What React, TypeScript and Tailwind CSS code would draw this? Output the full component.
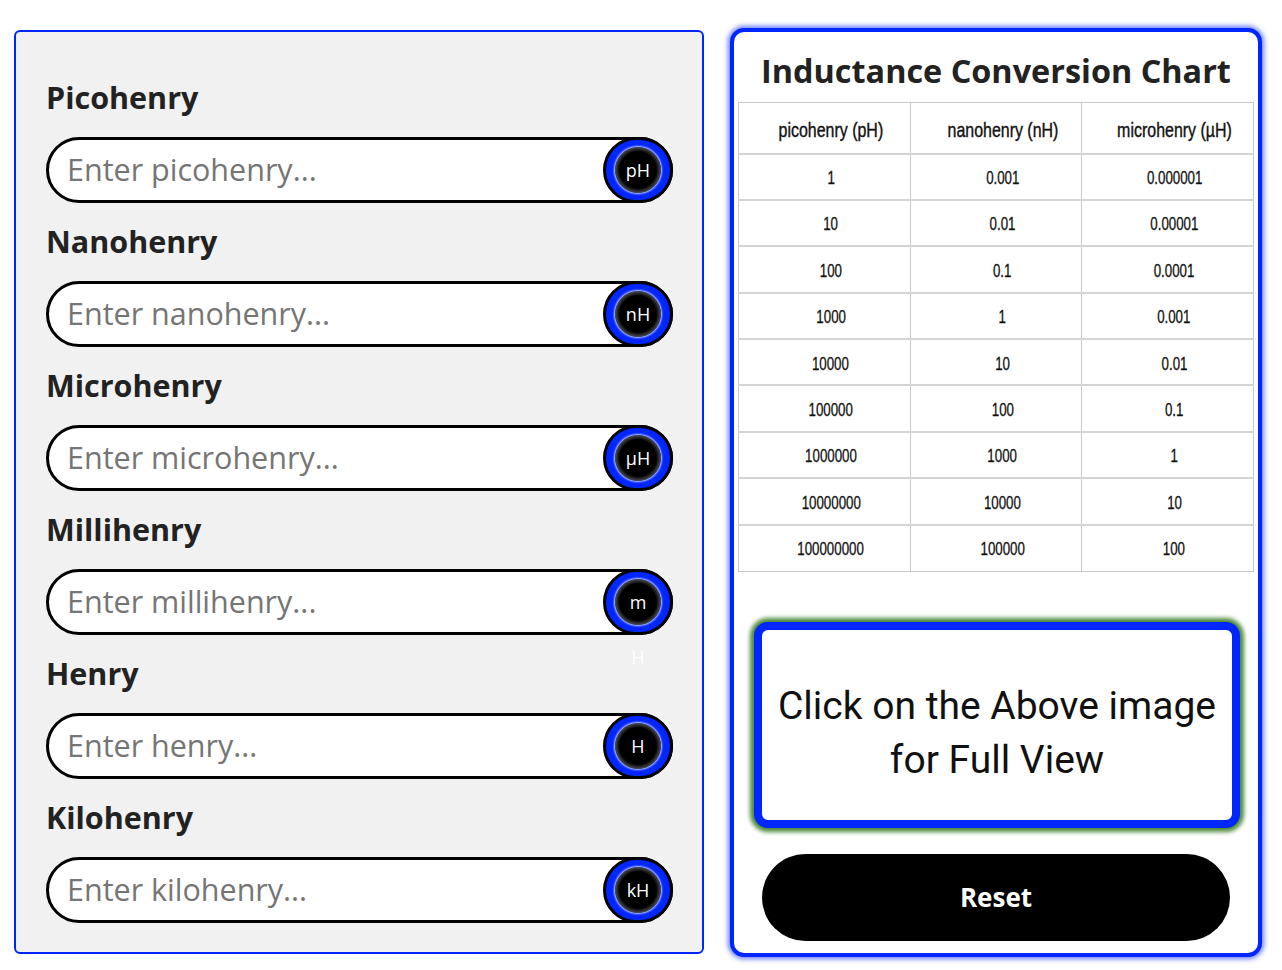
import React from "react";

const units = [
  { label: "Picohenry", placeholder: "Enter picohenry...", sym: "pH" },
  { label: "Nanohenry", placeholder: "Enter nanohenry...", sym: "nH" },
  { label: "Microhenry", placeholder: "Enter microhenry...", sym: "µH" },
  { label: "Millihenry", placeholder: "Enter millihenry...", sym: "m", spill: "H" },
  { label: "Henry", placeholder: "Enter henry...", sym: "H" },
  { label: "Kilohenry", placeholder: "Enter kilohenry...", sym: "kH" },
];

const rows = [
  ["1", "0.001", "0.000001"],
  ["10", "0.01", "0.00001"],
  ["100", "0.1", "0.0001"],
  ["1000", "1", "0.001"],
  ["10000", "10", "0.01"],
  ["100000", "100", "0.1"],
  ["1000000", "1000", "1"],
  ["10000000", "10000", "10"],
  ["100000000", "100000", "100"],
];

function Badge({ sym, spill }: { sym: string; spill?: string }) {
  return (
    <div className="relative -my-[3px] -mr-[3px] flex h-[66px] w-[70px] shrink-0 items-center justify-center rounded-full border-[3px] border-black bg-[#0026ff]">
      <div className="flex h-[46px] w-[46px] items-center justify-center rounded-full bg-[radial-gradient(circle,#000_0%,#000_56%,#555_72%,#fff_90%,#cfd6ff_100%)] shadow-[0_0_2px_1px_rgba(255,255,255,0.8)]">
        <span className="text-[18px] leading-none text-white">{sym}</span>
      </div>
      {spill && (
        <span className="absolute left-1/2 top-[76px] -translate-x-1/2 text-[18px] leading-none text-white">
          {spill}
        </span>
      )}
    </div>
  );
}

export default function App() {
  return (
    <div className="min-h-screen bg-white font-['Open_Sans',sans-serif]">
      <div className="flex items-start gap-[26px] pl-[14px] pt-[30px]">
        {/* left: converter inputs */}
        <div className="w-[690px] rounded-[6px] border-2 border-[#0026ff] bg-[#f1f1f1] pb-[29px] pl-[30px] pr-[29px] pt-[46px]">
          {units.map((u, i) => (
            <div key={u.label} className={i > 0 ? "mt-[19px]" : ""}>
              <label className="block h-[38px] text-[30.5px] font-bold leading-[38px] text-[#222]">
                {u.label}
              </label>
              <div className="mt-[21px] flex h-[66px] items-center rounded-full border-[3px] border-black bg-white">
                <input
                  className="min-w-0 flex-1 bg-transparent pl-[18px] text-[30.5px] text-[#222] outline-none placeholder:text-[#757575]"
                  placeholder={u.placeholder}
                />
                <Badge sym={u.sym} spill={u.spill} />
              </div>
            </div>
          ))}
        </div>

        {/* right: chart + actions */}
        <div className="-mt-[2px] w-[532px] rounded-[14px] border-4 border-[#0026ff] bg-white px-[4px] pb-[12px] pt-[14px] shadow-[0_0_5px_2px_rgba(0,38,255,0.6)]">
          <h2 className="text-center text-[32.4px] font-bold leading-[48px] text-[#222]">
            Inductance Conversion Chart
          </h2>
          <table className="mt-[8px] w-full table-fixed border-collapse border border-[#c8c8c8] font-['Liberation_Sans',Arial,sans-serif] text-[#111]">
            <thead>
              <tr className="h-[51px]">
                {["picohenry (pH)", "nanohenry (nH)", "microhenry (µH)"].map((h) => (
                  <th key={h} className="border border-[#c8c8c8] pl-[13px] pt-[4px] font-normal">
                    <span className="inline-block scale-x-[0.76] text-[21px] [-webkit-text-stroke:0.4px_#111]">
                      {h}
                    </span>
                  </th>
                ))}
              </tr>
            </thead>
            <tbody>
              {rows.map((r) => (
                <tr key={r[0]} className="h-[46.4px]">
                  {r.map((c, j) => (
                    <td
                      key={j}
                      className="border-x border-t-2 border-[#c8c8c8] border-t-[#d4d4d4] pl-[13px] pt-[3px] text-center"
                    >
                      <span className="inline-block scale-x-[0.7] text-[19px] [-webkit-text-stroke:0.3px_#111]">
                        {c}
                      </span>
                    </td>
                  ))}
                </tr>
              ))}
            </tbody>
          </table>

          <div className="ml-[16px] mr-[14px] mt-[50px] flex h-[206px] flex-col items-center justify-center rounded-[14px] border-[8px] border-[#0026ff] bg-white pt-[16px] shadow-[0_0_4px_4px_#4c8a3a]">
            <p className="text-center font-['Roboto',sans-serif] text-[39px] leading-[54px] text-[#111]">
              Click on the Above image
              <br />
              for Full View
            </p>
          </div>

          <button className="mx-auto mt-[26px] flex h-[87px] w-[468px] items-center justify-center rounded-full bg-black text-[26px] font-bold text-white">
            Reset
          </button>
        </div>
      </div>
    </div>
  );
}
